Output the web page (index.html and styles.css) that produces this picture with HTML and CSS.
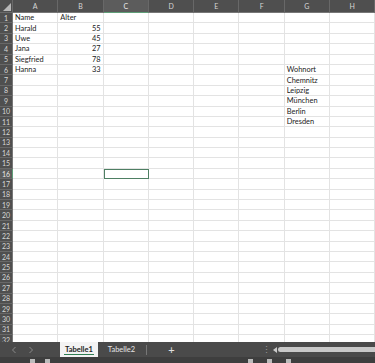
FILE: index.html
```html
<!DOCTYPE html>
<html lang="de">
<head>
    <meta charset="UTF-8">
    <meta name="viewport" content="width=device-width, initial-scale=1.0">
    <title>Mappe1</title>
    <link rel="stylesheet" href="styles.css">
</head>
<body>
    <div class="sheet">
        <div class="grid" id="grid"></div>
    </div>

    <div class="tabbar">
        <span class="nav">
            <svg width="6" height="8" viewBox="0 0 6 8"><path d="M4.5 1 L1.5 4 L4.5 7" fill="none" stroke="#8a8a8a" stroke-width="1"/></svg>
        </span>
        <span class="nav">
            <svg width="6" height="8" viewBox="0 0 6 8"><path d="M1.5 1 L4.5 4 L1.5 7" fill="none" stroke="#8a8a8a" stroke-width="1"/></svg>
        </span>
        <span class="tab active">Tabelle1</span>
        <span class="tab">Tabelle2</span>
        <span class="sep"></span>
        <span class="plus">+</span>
        <span class="dots">&#8942;</span>
        <div class="scroll">
            <span class="arrow"></span>
            <span class="thumb"></span>
        </div>
    </div>
    <div class="status">
        <span class="ico" style="margin-left:30px"></span>
        <span class="ico" style="margin-left:10px"></span>
        <span class="ico" style="margin-left:198px"></span>
        <span class="ico" style="margin-left:14px"></span>
        <span class="ico" style="margin-left:14px"></span>
    </div>

    <script>
        const grid = document.getElementById('grid');
        const cols = ['A', 'B', 'C', 'D', 'E', 'F', 'G', 'H'];

        // Zellinhalte: [Zeile, Spalte] -> Text
        const data = {
            '1A': 'Name', '1B': 'Alter',
            '2A': 'Harald', '2B': 55,
            '3A': 'Uwe', '3B': 45,
            '4A': 'Jana', '4B': 27,
            '5A': 'Siegfried', '5B': 78,
            '6A': 'Hanna', '6B': 33,
            '6G': 'Wohnort', '7G': 'Chemnitz', '8G': 'Leipzig',
            '9G': 'München', '10G': 'Berlin', '11G': 'Dresden'
        };
        const sel = { row: 16, col: 'C' };

        let html = '<div class="corner"><span></span></div>';
        cols.forEach(c => {
            html += `<div class="colhead${c === sel.col ? ' cur' : ''}">${c}</div>`;
        });

        for (let r = 1; r <= 32; r++) {
            html += `<div class="rowhead${r === sel.row ? ' cur' : ''}">${r}</div>`;
            cols.forEach(c => {
                const v = data[r + c];
                let cls = 'cell';
                if (typeof v === 'number') cls += ' num';
                if (r === sel.row && c === sel.col) cls += ' selected';
                html += `<div class="${cls}">${v === undefined ? '' : v}</div>`;
            });
        }
        grid.innerHTML = html;
    </script>
</body>
</html>
```

FILE: styles.css
```css
* { box-sizing: border-box; }
body { margin: 0; width: 375px; height: 363px; overflow: hidden; background: #fff; font-family: Lato, "Open Sans", sans-serif; }

.sheet { height: 342px; overflow: hidden; }
.grid { display: grid; grid-template-columns: 13px repeat(8, 45.3px); grid-template-rows: 13px repeat(32, 10.4px); }

.corner { background: #4f4f4f; border-right: 1px solid #6a6a6a; border-bottom: 1px solid #6a6a6a; position: relative; }
.corner span { position: absolute; right: 1px; bottom: 1px; width: 0; height: 0; border-left: 8px solid transparent; border-bottom: 8px solid #b8b8b8; }

.colhead { background: #4f4f4f; color: #d6d6d6; font-size: 7px; display: flex; align-items: center; justify-content: center; border-right: 1px solid #686868; border-bottom: 1px solid #777; }
.colhead.cur { background: #5c5c5c; border-bottom: 1px solid #5f9e78; color: #e8e8e8; }

.rowhead { background: #4f4f4f; color: #d6d6d6; font-size: 7px; display: flex; align-items: center; justify-content: center; border-bottom: 1px solid #686868; border-right: 1px solid #777; }
.rowhead.cur { background: #5c5c5c; border-right: 1px solid #5f9e78; color: #e8e8e8; }

.cell { font-size: 7.4px; color: #222; border-right: 1px solid #e3e3e3; border-bottom: 1px solid #e3e3e3; padding: 0 2px; display: flex; align-items: center; white-space: nowrap; }
.cell.num { justify-content: flex-end; }
.cell.selected { outline: 1.5px solid #4e7f63; outline-offset: -1px; position: relative; }

.tabbar { height: 15px; background: #4a4a4a; display: flex; align-items: center; color: #e4e4e4; font-size: 7.5px; }
.nav { width: 17px; display: flex; align-items: center; justify-content: center; margin-left: 5px; }
.nav + .nav { margin-left: 0; margin-right: 21px; }
.tab { height: 15px; padding: 0 5px; display: flex; align-items: center; margin-right: 5px; color: #e4e4e4; }
.tab.active { background: #f3f3f3; color: #222; font-weight: bold; position: relative; }
.tab.active::after { content: ""; position: absolute; left: 4px; right: 4px; bottom: 2px; height: 1px; background: #2f7d52; }
.sep { width: 1px; height: 10px; background: #777; margin-left: 1px; }
.plus { color: #e0e0e0; font-size: 11px; margin-left: 21px; }
.dots { color: #999; font-size: 9px; margin-left: 87px; }
.scroll { flex: 1; display: flex; align-items: center; margin-left: 2px; }
.arrow { width: 0; height: 0; border-top: 3px solid transparent; border-bottom: 3px solid transparent; border-right: 4px solid #ccc; margin-right: 1px; }
.thumb { flex: 1; height: 5px; background: #c8c8c8; border-radius: 3px 0 0 3px; }

.status { height: 6px; background: #3e3e3e; display: flex; align-items: flex-end; }
.ico { width: 5px; height: 4px; background: #bbb; }
```
